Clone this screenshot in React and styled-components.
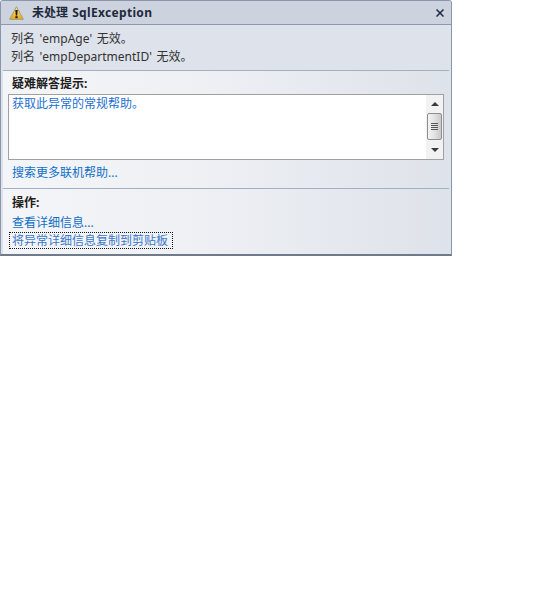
import styled, { createGlobalStyle } from 'styled-components';

const GlobalStyle = createGlobalStyle`
  html, body {
    margin: 0;
    padding: 0;
    background: #fff;
  }
  body {
    font-family: "Noto Sans", "Noto Sans CJK SC", sans-serif;
    font-size: 12px;
    line-height: 18px;
  }
`;

const Panel = styled.div`
  position: relative;
  box-sizing: border-box;
  width: 452px;
  height: 256px;
  border: 1px solid #8a97ab;
  border-top-color: #8b98ac;
  border-bottom: 2px solid #6f7a8a;
  border-radius: 3px 3px 0 0;
  background: #dee2ea;
  overflow: hidden;
`;

const TitleBar = styled.div`
  box-sizing: border-box;
  height: 24px;
  display: flex;
  align-items: center;
  padding: 0 6px 0 8px;
  background: #ccd3df;
  border-bottom: 1px solid #8d99ad;
`;

const TitleText = styled.div`
  margin-left: 8px;
  flex: 1;
  font-size: 12px;
  font-weight: 700;
  color: #1e2a3c;
  word-spacing: 1px;
`;

// Segoe UI 粗体比 Noto Sans 略宽
const TitleLatin = styled.span`
  letter-spacing: 0.33px;
`;

const CloseBtn = styled.svg`
  width: 8px;
  height: 8px;
  margin-right: 1px;
`;

const Message = styled.div`
  box-sizing: border-box;
  height: 45px;
  padding: 5px 10px 0;
  color: #333;
  word-spacing: 1.5px;
`;

const Gradient = styled.div`
  margin: 0 2px;
  background: linear-gradient(90deg, #f4f5f8 0%, #eef0f4 45%, #dee2ea 100%);
`;

const Section = styled.div`
  box-sizing: border-box;
  height: ${(p) => p.$h}px;
  padding: ${(p) => p.$top}px 5px 0;
  border-top: 1px solid #a2b0c2;
`;

const Label = styled.div`
  margin-left: 4px;
  font-weight: 700;
  color: #1d1d1d;
`;

const TextBox = styled.div`
  box-sizing: border-box;
  height: 66px;
  margin-top: 1px;
  display: flex;
  background: #fff;
  border: 1px solid #a0a0a0;
`;

const TipText = styled.div`
  flex: 1;
  padding: 0 4px 0 3px;
  color: #1f6fd0;
`;

const ScrollBar = styled.div`
  width: 17px;
  display: flex;
  flex-direction: column;
  align-items: center;
  background: #f2f2f2;
`;

const Arrow = styled.div`
  width: 0;
  height: 0;
  margin: 7px 0;
  border-left: 4px solid transparent;
  border-right: 4px solid transparent;
  ${(p) => (p.$down ? 'border-top: 4px solid #3a3a3a;' : 'border-bottom: 4px solid #3a3a3a;')}
`;

const Thumb = styled.div`
  box-sizing: border-box;
  width: 15px;
  height: 27px;
  display: flex;
  flex-direction: column;
  align-items: center;
  justify-content: center;
  gap: 1px;
  background: linear-gradient(90deg, #f3f3f3, #e2e2e2 50%, #c9c9c9);
  border: 1px solid #8e8f8f;
  border-radius: 2px;
`;

const Grip = styled.div`
  width: 7px;
  height: 1px;
  background: #55585c;
`;

const Spacer = styled.div`
  flex: 1;
`;

const Link = styled.div`
  margin-left: 4px;
  color: #0f6fc6;
`;

const HelpLink = styled(Link)`
  margin-top: 4px;
`;

const ActionLink = styled(Link)`
  margin-top: 2px;
`;

const FocusLink = styled.div`
  box-sizing: border-box;
  display: inline-block;
  height: 17px;
  margin-left: 1px;
  padding: 0 4px 0 2px;
  line-height: 15px;
  color: #3b78c9;
  border: 1px dotted #111;
`;

export default function App() {
  return (
    <>
      <GlobalStyle />
      <Panel>
        <TitleBar>
          <svg width="15" height="14" viewBox="0 0 15 14">
            <defs>
              <linearGradient id="warn" x1="0" y1="0" x2="0" y2="1">
                <stop offset="0" stopColor="#fdeb8a" />
                <stop offset="1" stopColor="#e8a80c" />
              </linearGradient>
            </defs>
            <path d="M7.5 .7 L14.3 13.3 L.7 13.3 Z" fill="url(#warn)" stroke="#a39a78" strokeWidth="1" strokeLinejoin="round" />
            <path d="M6.3 4 h2.4 l-.5 5.5 h-1.4 Z" fill="#1a1a1a" />
            <rect x="6.4" y="10.2" width="2.2" height="2" fill="#1a1a1a" />
          </svg>
          <TitleText>
            未处理 <TitleLatin>SqlException</TitleLatin>
          </TitleText>
          <CloseBtn viewBox="0 0 8 8">
            <path d="M.5 .5 L7.5 7.5 M7.5 .5 L.5 7.5" stroke="#1b2a41" strokeWidth="1.5" fill="none" />
          </CloseBtn>
        </TitleBar>
        <Message>
          <div>列名 'empAge' 无效。</div>
          <div>列名 'empDepartmentID' 无效。</div>
        </Message>
        <Gradient>
          <Section $h={118} $top={4}>
            <Label>疑难解答提示:</Label>
            <TextBox>
              <TipText>获取此异常的常规帮助。</TipText>
              <ScrollBar>
                <Arrow />
                <Thumb>
                  <Grip />
                  <Grip />
                  <Grip />
                  <Grip />
                </Thumb>
                <Spacer />
                <Arrow $down />
              </ScrollBar>
            </TextBox>
            <HelpLink>搜索更多联机帮助...</HelpLink>
          </Section>
          <Section $h={66} $top={5}>
            <Label>操作:</Label>
            <ActionLink>查看详细信息...</ActionLink>
            <FocusLink>将异常详细信息复制到剪贴板</FocusLink>
          </Section>
        </Gradient>
      </Panel>
    </>
  );
}
